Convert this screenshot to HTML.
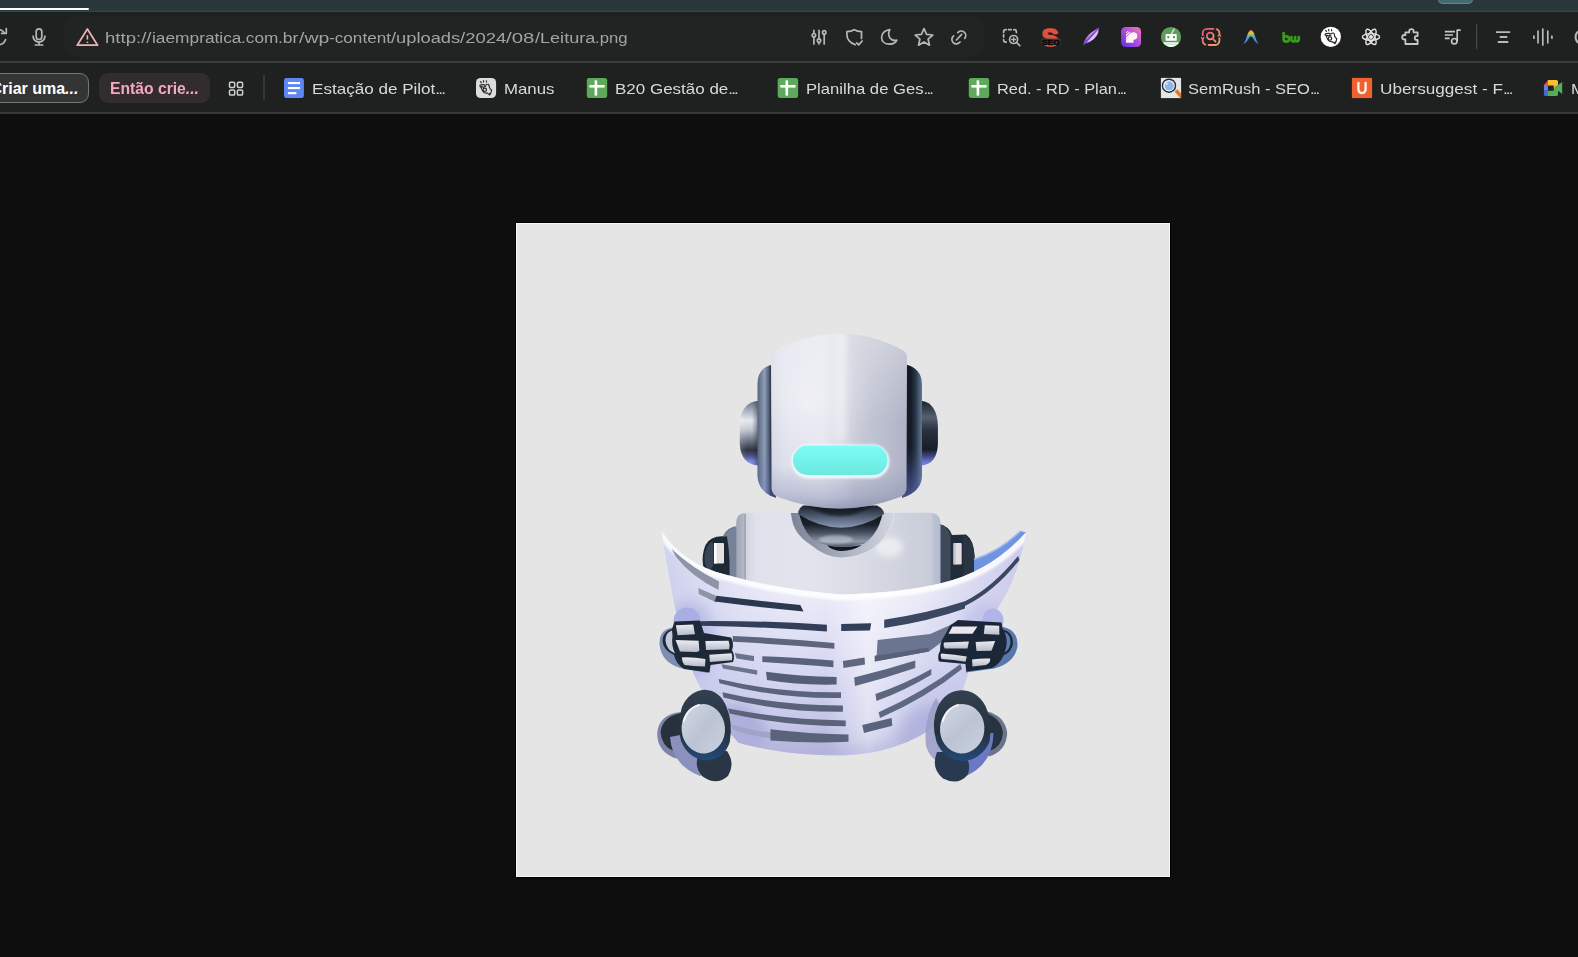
<!DOCTYPE html>
<html lang="pt-BR">
<head>
<meta charset="utf-8">
<title>Leitura.png</title>
<style>
  html, body { margin:0; padding:0; overflow:hidden; }
  body { width:1578px; height:957px; overflow:hidden; background:#0e0e0e; position:relative;
         font-family:"Liberation Sans", sans-serif; }
  .abs { position:absolute; }
  #strip { left:0; top:0; width:1578px; height:12px; background:#27373a; box-shadow:inset 0 -1.5px 0 #2f4547; }
  #tabline { left:0; top:8px; width:89px; height:2px; background:#ffffff; border-radius:0 1px 1px 0; }
  #toppill { left:1438px; top:-6px; width:35px; height:9.5px; border-radius:5px; background:#436a70; box-shadow:inset 0 -1px 0 #5a898d; }
  #toolbar { left:0; top:12px; width:1578px; height:49px; background:#1f2121; }
  #urlbar { left:64px; top:16px; width:920px; height:41px; border-radius:13px; background:#222424; }
  #sep1 { left:0; top:61px; width:1578px; height:2px; background:#3a3d3d; }
  #bookbar { left:0; top:63px; width:1578px; height:49px; background:#1f2020; }
  #sep2 { left:0; top:112px; width:1578px; height:2px; background:#363838; }
  #url { left:105px; top:28.25px; font-size:15.3px; line-height:19px; color:#a3a3a3; white-space:nowrap; width:530px; height:19px; }
  #url span { position:absolute; top:0; transform-origin:0 50%; white-space:pre; }
  .bm { top:79px; font-size:15px; line-height:19px; color:#d9d9d9; white-space:nowrap; transform-origin:0 50%; }
  .bm i { font-style:normal; letter-spacing:-1.6px; }
  .pill { top:73px; height:30px; box-sizing:border-box; border-radius:9px; }
  #pill1 { left:-20px; width:109px; background:#333535; border:1px solid #747776; }
  #pill2 { left:99px; width:111px; background:#332c2e; }
  .pt { top:79px; font-size:16px; line-height:20px; font-weight:bold; white-space:nowrap; transform-origin:0 50%; }
  .fav { top:78px; width:20px; height:20px; border-radius:3px; }
  #img { left:516px; top:223px; width:654px; height:654px; background:#e5e5e5; box-shadow:0 0 0 1px #000000; }
</style>
</head>
<body>
<div class="abs" id="strip"></div>
<div class="abs" id="tabline"></div>
<div class="abs" id="toppill"></div>
<div class="abs" id="toolbar"></div>
<div class="abs" id="urlbar"></div>
<div class="abs" id="sep1"></div>
<div class="abs" id="bookbar"></div>
<div class="abs" id="sep2"></div>

<div class="abs" id="url"><span style="left:0.0px;transform:scaleX(1.2147)">http://</span><span style="left:46.5px;transform:scaleX(1.1317)">iaempratica</span><span style="left:136.0px;transform:scaleX(1.1250)">.com</span><span style="left:173.3px;transform:scaleX(1.1426)">.br</span><span style="left:193.7px;transform:scaleX(1.2680)">/wp</span><span style="left:223.9px;transform:scaleX(1.1233)">-content</span><span style="left:286.0px;transform:scaleX(1.1961)">/uploads</span><span style="left:355.2px;transform:scaleX(1.2064)">/2024</span><span style="left:401.4px;transform:scaleX(1.3348)">/08</span><span style="left:429.8px;transform:scaleX(1.1814)">/Leitura</span><span style="left:490.1px;transform:scaleX(1.0915)">.png</span></div>

<!-- TOOLBAR-ICONS-START -->
<svg class="abs" style="left:0;top:0" width="1578" height="114" viewBox="0 0 1578 114" fill="none" stroke-linecap="round" stroke-linejoin="round">
  <defs>
    <linearGradient id="gP" x1="0" y1="1" x2="1" y2="0"><stop offset="0" stop-color="#5a2ef0"/><stop offset="0.5" stop-color="#ae4cde"/><stop offset="1" stop-color="#f878b4"/></linearGradient>
    <linearGradient id="gQ" x1="0" y1="0" x2="1" y2="1"><stop offset="0" stop-color="#e4567f"/><stop offset="1" stop-color="#f3a35c"/></linearGradient>
    <linearGradient id="gA" x1="0" y1="0" x2="0" y2="1"><stop offset="0" stop-color="#f06a50"/><stop offset="0.22" stop-color="#f0c040"/><stop offset="0.4" stop-color="#58c088"/><stop offset="0.6" stop-color="#4a90e8"/><stop offset="1" stop-color="#4a7fe0"/></linearGradient>
    <linearGradient id="gF" x1="0" y1="1" x2="1" y2="0"><stop offset="0" stop-color="#7a48c0"/><stop offset="0.5" stop-color="#b48ae6"/><stop offset="1" stop-color="#8a5ad0"/></linearGradient>
  </defs>
  <!-- reload (partial) -->
  <g stroke="#b6b6b6" stroke-width="1.700">
    <path d="M5.600 39.600 A7.600 7.600 0 0 1 -2 44.800"/>
    <path d="M-2 29.400 A7.600 7.600 0 0 1 4.200 32.800"/>
    <path d="M6.300 28.600 V33.400 H1.600"/>
  </g>
  <!-- mic -->
  <g stroke="#b6b6b6" stroke-width="1.7">
    <rect x="36.2" y="28.9" width="5.6" height="10.6" rx="2.8"/>
    <path d="M33.1 36.2 A5.9 5.9 0 0 0 44.9 36.2"/>
    <path d="M39 42.2 V45 M35.3 45 H42.7"/>
  </g>
  <!-- warning triangle -->
  <g stroke="#e9b5b1" stroke-width="1.7">
    <path d="M87.4 29 L97.6 45.2 H77.2 Z"/>
    <path d="M87.4 35.2 V39.6" stroke-width="1.6" stroke-linecap="butt"/>
    <path d="M87.4 41.6 V43" stroke-width="1.6" stroke-linecap="butt"/>
  </g>
  <!-- sliders -->
  <g stroke="#b6b6b6" stroke-width="1.7">
    <path d="M813.9 30.4 V33.2 M813.9 37.2 V44"/>
    <circle cx="813.9" cy="35.2" r="1.700"/>
    <path d="M819 30.4 V38.6 M819 42.6 V44"/>
    <circle cx="819" cy="40.6" r="1.700"/>
    <path d="M824.2 34.6 V44"/>
    <circle cx="824.2" cy="32.4" r="1.700"/>
  </g>
  <!-- shield -->
  <g stroke="#b6b6b6" stroke-width="1.7">
    <path d="M855.2 44.6 C849.5 42.6 846.9 38.8 846.9 34.4 V31.6 C850.3 31.6 852.6 30.8 854.2 29.6 C855.8 30.8 858.1 31.6 861.5 31.6 V38.5"/>
    <path d="M856.6 42.8 L858.6 44.8 L862.2 41"/>
  </g>
  <!-- moon -->
  <path stroke="#b6b6b6" stroke-width="1.7" d="M889.8 29.6 C885 30.2 881.6 33.4 881.6 37.4 C881.6 41.6 885 44.2 889.4 44.2 C892.6 44.2 895.4 42.6 896.8 40.2 C891 41.4 886.6 36.4 889.8 29.6 Z"/>
  <!-- star -->
  <path stroke="#b6b6b6" stroke-width="1.7" d="M924 28.6 L926.6 34.4 L932.8 35 L928.1 39.2 L929.5 45.2 L924 42 L918.5 45.2 L919.9 39.2 L915.2 35 L921.4 34.4 Z"/>
  <!-- link -->
  <g stroke="#b6b6b6" stroke-width="1.700">
    <path d="M957.800 32.600 A4.500 4.500 0 1 1 964.700 38.400"/>
    <path d="M960 42 A4.500 4.500 0 1 1 953.600 35.800"/>
    <path d="M956.400 40 L961.700 34.300"/>
  </g>
  <!-- dashed box + zoom -->
  <g stroke="#b6b6b6" stroke-width="1.700">
    <path d="M1003.600 32.400 V31.900 A2.200 2.200 0 0 1 1005.800 29.700 H1006.200 M1008.600 29.700 H1011.200 M1013.800 29.700 H1014.200 A2.200 2.200 0 0 1 1016.400 31.900 V32.600 M1003.600 34.800 V37 M1003.600 39.600 V40 A2.200 2.200 0 0 0 1005.800 42.200 H1006.200"/>
    <circle cx="1013.600" cy="39.500" r="4"/>
    <path d="M1016.600 42.500 L1019.800 45.700"/>
    <path d="M1011.700 39.500 H1015.500 M1013.600 37.600 V41.400" stroke-width="1.300"/>
  </g>
  <!-- S SEO -->
  <text x="1041.600" y="45.800" font-family="Liberation Sans, sans-serif" font-weight="bold" font-size="24.500" fill="#e1503c" stroke="#e1503c" stroke-width="1.600" textLength="17" lengthAdjust="spacingAndGlyphs">S</text>
  <rect x="1041.200" y="38.600" width="19.800" height="6.400" fill="#343434" stroke="none" opacity="0.85"/>
  <text x="1041.800" y="44.900" font-family="Liberation Sans, sans-serif" font-weight="bold" font-size="8" fill="#050505" stroke="#050505" stroke-width="0.400" textLength="18" lengthAdjust="spacingAndGlyphs">SEO</text>
  <!-- feather -->
  <g stroke="none">
    <path fill="#8a52c8" d="M1083.200 45.800 Q1083.600 42 1085.200 39 Q1088.400 33.600 1093 31 Q1096 29.200 1099 27.400 Q1099.200 31.600 1097.200 35.200 Q1094.600 39.400 1090.400 41.800 Q1087.600 43.200 1085.400 43.600 Z"/>
    <path fill="#c7a4ee" d="M1085.800 40 Q1088.600 34.400 1093.400 31.600 Q1096 30 1098 28.800 Q1092 33.600 1085.800 40 Z"/>
    <path fill="#dcc6f6" d="M1086.600 42.400 Q1092 37 1098.400 29.600 Q1098.200 32.800 1096.600 35.400 Q1094.200 39.200 1090.200 41.200 Q1088 42.200 1086.600 42.400 Z"/>
    <path d="M1084.600 43.600 Q1091 37 1098.400 28.200" stroke="#7a40b8" stroke-width="0.900" fill="none"/>
  </g>
  <!-- P app -->
  <rect x="1121.100" y="26.900" width="20" height="20.200" rx="4.600" fill="url(#gP)" stroke="none"/>
  <g stroke="none" fill="#fff4f3">
    <circle cx="1133.500" cy="36" r="3.800"/>
    <path d="M1126 37.200 L1130.400 33.200 L1133.500 36 V42.800 H1126 Z"/>
    <path d="M1126 34.800 L1129.600 31.400 L1130.500 32.300 L1126 36.600 Z M1126 32.400 L1127.600 31 L1128.500 31.200 L1126 33.600 Z"/>
  </g>
  <!-- green robot -->
  <circle cx="1171" cy="37" r="10.100" fill="#5c9d5c" stroke="none"/>
  <rect x="1165.600" y="34" width="11.100" height="6.800" rx="0.600" fill="#ffffff" stroke="none"/>
  <rect x="1167.300" y="36.200" width="1.900" height="1.900" fill="#4f8a4f" stroke="none"/>
  <rect x="1173" y="36.200" width="1.900" height="1.900" fill="#4f8a4f" stroke="none"/>
  <path stroke="#c8f0c4" stroke-width="1.500" stroke-linecap="butt" d="M1171.400 34 L1174.200 28.800"/>
  <path fill="#f4fbf4" stroke="none" d="M1163 42.300 H1179 Q1176.200 47 1171 47.100 Q1165.800 47 1163 42.300 Z"/>
  <path stroke="#9ccf9c" stroke-width="0.700" d="M1166 44.200 H1176"/>
  <!-- Q gradient icon -->
  <g stroke="url(#gQ)" stroke-width="1.8">
    <path d="M1213.4 28.8 H1207 A4.3 4.3 0 0 0 1202.7 33.1 V35.2 M1208.6 45 H1215 A4.3 4.3 0 0 0 1219.4 40.7 V38.2"/>
    <path d="M1202.7 38.6 V40.7 A4.3 4.3 0 0 0 1205.4 44.6 M1219.4 35 V33.1 A4.3 4.3 0 0 0 1216.6 29.2" />
    <path d="M1201.4 37.4 L1202.7 39 L1204 37.4 M1218.1 36.2 L1219.4 34.6 L1220.7 36.2" stroke-width="1.2"/>
    <circle cx="1210.2" cy="36" r="3.4"/>
    <path d="M1212.8 38.6 L1215.6 41.6"/>
  </g>
  <!-- A arc -->
  <path fill="url(#gA)" stroke="none" d="M1243.2 44 C1246.6 40.6 1247.6 30 1251 30 C1254.4 30 1255.4 40.6 1258.8 44 C1254 42.2 1253.4 36.4 1251 36.4 C1248.6 36.4 1248 42.2 1243.2 44 Z"/>
  <!-- bw -->
  <g fill="none" stroke="#3b9a19" stroke-width="2.700" stroke-linecap="round" stroke-linejoin="round">
    <path d="M1283.600 33.200 V39 A2.700 2.700 0 1 0 1286.300 36.300 H1285.400"/>
    <path d="M1291.400 37 V39.600 A1.850 1.850 0 0 0 1295.100 39.600 V37 M1295.100 39.600 A1.850 1.850 0 0 0 1298.800 39.600 V37"/>
  </g>
  <!-- hand white circle -->
  <circle cx="1330.800" cy="36.800" r="10.150" fill="#ffffff" stroke="none"/>
  <use href="#manushand" transform="translate(845.200 -51.300)"/>
  <!-- atom -->
  <g stroke="#e6e6e6" stroke-width="1.400">
    <ellipse cx="1371" cy="36.900" rx="8.600" ry="3.300"/>
    <ellipse cx="1371" cy="36.900" rx="8.600" ry="3.300" transform="rotate(60 1371 36.900)"/>
    <ellipse cx="1371" cy="36.900" rx="8.600" ry="3.300" transform="rotate(-60 1371 36.900)"/>
    <circle cx="1371" cy="36.900" r="1.300" fill="#e6e6e6"/>
  </g>
  <!-- puzzle -->
  <path stroke="#c6c6c6" stroke-width="1.8" d="M1405.4 44 V39.4 H1404.4 A2.2 2.2 0 0 1 1404.4 35 H1405.4 V32.4 H1409.2 V31.4 A2.2 2.2 0 0 1 1413.6 31.400 V32.4 H1417.6 V36 H1416.8 A2 2 0 0 0 1416.8 40 H1417.6 V44 Z"/>
  <!-- music queue -->
  <g stroke="#c6c6c6" stroke-width="1.7">
    <path d="M1444.8 31.6 H1455 M1444.8 35 H1453 M1444.800 38.3 H1449.6" stroke-linecap="butt"/>
    <path d="M1457.2 41 V30.2 H1460"/>
    <circle cx="1454.300" cy="41.2" r="2.7"/>
  </g>
  <!-- divider -->
  <path stroke="#474949" stroke-width="1.2" d="M1476.600 24.5 V49"/>
  <!-- three lines -->
  <g stroke="#b8b8b8" stroke-width="1.8" stroke-linecap="butt">
    <path d="M1496 32.2 H1510.200 M1499.700 37 H1507.300 M1497.800 42 H1508.300"/>
  </g>
  <!-- waveform -->
  <g stroke="#b8b8b8" stroke-width="1.7">
    <path d="M1542.800 29 V45 M1538 31 V42.800 M1547.800 31 V42.800 M1533.900 36 V38.2 M1551.900 36 V38.2"/>
  </g>
  <!-- edge circle -->
  <path stroke="#b8b8b8" stroke-width="2" d="M1580 30.600 A7 7 0 0 0 1580 43.600"/>

  <!-- ===== favicons ===== -->
  <g stroke="none">
    <!-- docs -->
    <rect x="284" y="77.900" width="19.900" height="20.200" rx="2.400" fill="#5e86f5"/>
    <rect x="287.900" y="82" width="12.200" height="2.100" fill="#ffffff"/>
    <rect x="287.900" y="87" width="12.200" height="2.100" fill="#ffffff"/>
    <rect x="287.900" y="92.100" width="8.500" height="2.100" fill="#ffffff"/>
    <!-- manus -->
    <rect x="476" y="77.900" width="20.100" height="20.200" rx="4.600" fill="#dcdcdc"/>
    <g id="manushand"><g fill="none" stroke="#262626" stroke-width="1.150" stroke-linecap="round" stroke-linejoin="round">
      <path d="M480 86.200 Q479.600 84.800 481.200 84.900 L483.600 84.500 Q485 85.700 486 85 Q487.400 83.800 488.600 84.600 Q489.400 86 489.500 87.600 Q490 89 491.600 90 Q491.200 92.800 489.700 95 Q488.200 94 487.400 93 Q485.600 93.400 484 92.400 Q482.400 91.200 481.800 89.200 Q481.600 87.600 480 86.200 Z"/>
      <path d="M481.200 86.600 Q483.400 87.600 485.600 86.600"/>
      <circle cx="484.800" cy="89.800" r="1.700"/>
      <path d="M480.400 81.700 L481.300 82.700 M483.500 80.600 V82 M486.400 80.800 V82.100"/>
    </g>
    <path d="M488.600 93.400 L489.700 95.200 L490.800 92.600 Z" fill="#262626" stroke="none"/></g>
    <!-- sheets x3 -->
    <g id="sheet1">
      <rect x="586.800" y="77.900" width="20.400" height="20.200" rx="2.400" fill="#5daa5b"/>
      <rect x="594.600" y="80.400" width="2.600" height="15.200" fill="#ffffff"/>
      <rect x="589.400" y="85" width="15.200" height="2.600" fill="#ffffff"/>
    </g>
    <use href="#sheet1" x="190.900"/>
    <use href="#sheet1" x="382"/>
    <!-- semrush -->
    <rect x="1160.900" y="77.900" width="20.200" height="20.200" fill="#e5e5e5"/>
    <path d="M1174.600 91.400 L1177.400 89.200 L1181.100 93.600 V98.100 H1180.200 Z" fill="#e8751c"/>
    <circle cx="1169" cy="85.700" r="6.500" fill="#fafdff" stroke="#232a36" stroke-width="1.400"/>
    <circle cx="1169.200" cy="85.900" r="4.600" fill="#8fb6e9"/>
    <circle cx="1167" cy="83.800" r="1" fill="#d8e8fa"/>
    <!-- ubersuggest -->
    <rect x="1351.900" y="77.900" width="20.200" height="20.200" fill="#f0612f"/>
    <path d="M1358.400 82.800 V89.600 A3.600 3.600 0 0 0 1365.600 89.600 V82.800" fill="none" stroke="#fff6ec" stroke-width="2.300"/>
    <!-- meet -->
    <path d="M1543.900 85 L1548 80 V85 Z" fill="#e8503e"/>
    <rect x="1543.900" y="85" width="4.100" height="5.700" fill="#5b84f2"/>
    <path d="M1543.900 90.700 H1548 V95.900 H1545.400 Q1543.900 95.900 1543.900 94.400 Z" fill="#4468d8"/>
    <path d="M1548 80 H1556.500 Q1558 80 1558 81.500 V85 L1553.700 88.400 V85.400 H1548 Z" fill="#f7bf2f"/>
    <path d="M1548 90.700 H1553.700 V88.400 L1558 85 L1562.200 81.900 V94 L1558 90.700 V94.400 Q1558 95.900 1556.500 95.900 H1548 Z" fill="#54ad58"/>
  </g>
  <!-- grid icon -->
  <g stroke="#d0d0d0" stroke-width="1.5">
    <rect x="229.500" y="82.200" width="5.200" height="5.200" rx="1.200"/>
    <rect x="237.400" y="82.200" width="5.200" height="5.200" rx="1.200"/>
    <rect x="229.500" y="89.900" width="5.200" height="5.200" rx="1.200"/>
    <rect x="237.400" y="89.900" width="5.200" height="5.200" rx="1.200"/>
  </g>
  <path stroke="#474949" stroke-width="1.200" d="M264 75.500 V100"/>
</svg>
<!-- TOOLBAR-ICONS-END -->

<div class="abs pill" id="pill1"></div>
<div class="abs pill" id="pill2"></div>
<div class="abs pt" id="pt1" style="left:-9.6px;color:#ffffff;">Criar uma<i>...</i></div>
<div class="abs pt" id="pt2" style="left:109.6px;transform:scaleX(0.98);color:#f3a9bf;">Então crie<i>...</i></div>

<!-- BOOKMARKS -->
<div class="abs bm" id="b1" style="left:312px;transform:scaleX(1.138);">Estação de Pilot<i>...</i></div>
<div class="abs bm" id="b2" style="left:504px;transform:scaleX(1.12);">Manus</div>
<div class="abs bm" id="b3" style="left:615px;transform:scaleX(1.132);">B20 Gestão de<i>...</i></div>
<div class="abs bm" id="b4" style="left:806px;transform:scaleX(1.11);">Planilha de Ges<i>...</i></div>
<div class="abs bm" id="b5" style="left:997px;transform:scaleX(1.09);">Red. - RD - Plan<i>...</i></div>
<div class="abs bm" id="b6" style="left:1188px;transform:scaleX(1.1);">SemRush - SEO<i>...</i></div>
<div class="abs bm" id="b7" style="left:1380px;transform:scaleX(1.143);">Ubersuggest - F<i>...</i></div>
<div class="abs bm" id="b8" style="left:1571px;transform:scaleX(1.12);">M</div>

<!-- FAVICONS -->

<div class="abs" id="img">
<!-- ROBOT-START -->
<svg class="abs" style="left:0;top:0" width="654" height="654" viewBox="516 223 654 654">
<defs>
  <linearGradient id="rg-face" x1="0" y1="0" x2="1" y2="0">
    <stop offset="0" stop-color="#cdd0df"/><stop offset="0.12" stop-color="#dadce9"/><stop offset="0.38" stop-color="#e0e1ec"/>
    <stop offset="0.52" stop-color="#d4d6e2"/><stop offset="0.6" stop-color="#c6c9d7"/><stop offset="0.8" stop-color="#bbbecd"/><stop offset="1" stop-color="#aaaec3"/>
  </linearGradient>
  <linearGradient id="rg-faceV" x1="0" y1="0" x2="0" y2="1">
    <stop offset="0" stop-color="#ffffff" stop-opacity="0.35"/><stop offset="0.5" stop-color="#ffffff" stop-opacity="0"/>
    <stop offset="0.74" stop-color="#7880a8" stop-opacity="0.0"/><stop offset="0.9" stop-color="#6a74a0" stop-opacity="0.3"/><stop offset="1" stop-color="#55608c" stop-opacity="0.6"/>
  </linearGradient>
  <radialGradient id="rg-faceHi" cx="0.28" cy="0.38" r="0.45">
    <stop offset="0" stop-color="#ffffff" stop-opacity="0.5"/><stop offset="1" stop-color="#ffffff" stop-opacity="0"/>
  </radialGradient>
  <linearGradient id="rg-bandL" x1="0" y1="0" x2="1" y2="0"><stop offset="0" stop-color="#56657c"/><stop offset="0.38" stop-color="#8f9eb8"/><stop offset="0.6" stop-color="#55647a"/><stop offset="0.72" stop-color="#2b3646"/><stop offset="1" stop-color="#2b3646"/></linearGradient>
  <linearGradient id="rg-bandR" x1="0" y1="0" x2="1" y2="0"><stop offset="0" stop-color="#141b25"/><stop offset="0.45" stop-color="#141b25"/><stop offset="0.7" stop-color="#2d3a4c"/><stop offset="0.92" stop-color="#566884"/><stop offset="1" stop-color="#62748f"/></linearGradient>
  <linearGradient id="rg-earL" x1="0" y1="0" x2="0" y2="1"><stop offset="0" stop-color="#64728a"/><stop offset="0.12" stop-color="#9aa5b5"/><stop offset="0.3" stop-color="#e6e9f0"/><stop offset="0.45" stop-color="#c0c6d0"/><stop offset="0.62" stop-color="#6c7482"/><stop offset="0.76" stop-color="#2e3540"/><stop offset="0.85" stop-color="#4a5284"/><stop offset="0.93" stop-color="#7a86da"/><stop offset="1" stop-color="#8a94e0"/></linearGradient>
  <linearGradient id="rg-earLV" x1="0" y1="0" x2="1" y2="0"><stop offset="0" stop-color="#ffffff" stop-opacity="0.15"/><stop offset="0.4" stop-color="#ffffff" stop-opacity="0"/><stop offset="0.65" stop-color="#1e2837" stop-opacity="0"/><stop offset="1" stop-color="#1e2837" stop-opacity="0.5"/></linearGradient>
  <linearGradient id="rg-earR" x1="0" y1="0" x2="0" y2="1"><stop offset="0" stop-color="#1a222c"/><stop offset="0.25" stop-color="#566070"/><stop offset="0.45" stop-color="#2a323e"/><stop offset="0.75" stop-color="#171d26"/><stop offset="0.85" stop-color="#3a447e"/><stop offset="0.95" stop-color="#6c7ad4"/><stop offset="1" stop-color="#7a88e0"/></linearGradient>
  <linearGradient id="rg-blueV" x1="0" y1="0" x2="0" y2="1">
    <stop offset="0" stop-color="#5c6ac4" stop-opacity="0"/><stop offset="0.62" stop-color="#5c6ac4" stop-opacity="0"/><stop offset="1" stop-color="#6a78d0" stop-opacity="0.6"/>
  </linearGradient>
  <linearGradient id="rg-visor" x1="0" y1="0" x2="0" y2="1">
    <stop offset="0" stop-color="#7dfcf8"/><stop offset="1" stop-color="#6be9dd"/>
  </linearGradient>
  <linearGradient id="rg-body" x1="0" y1="0" x2="1" y2="0">
    <stop offset="0" stop-color="#9ea5b6"/><stop offset="0.04" stop-color="#b4bac8"/><stop offset="0.045" stop-color="#d3d6e1"/><stop offset="0.1" stop-color="#dfe2eb"/>
    <stop offset="0.35" stop-color="#e3e5ed"/><stop offset="0.7" stop-color="#d5d8e2"/><stop offset="0.955" stop-color="#c8ccd8"/><stop offset="0.965" stop-color="#bcc3d2"/><stop offset="1" stop-color="#b0bad2"/>
  </linearGradient>
  <linearGradient id="rg-collar" x1="0" y1="0" x2="1" y2="0">
    <stop offset="0" stop-color="#7c8396"/><stop offset="0.4" stop-color="#a0a5b6"/><stop offset="0.75" stop-color="#bfc3d0"/><stop offset="1" stop-color="#d2d5df"/>
  </linearGradient>
  <linearGradient id="rg-neck1" x1="0" y1="0" x2="0" y2="1">
    <stop offset="0" stop-color="#1a212b"/><stop offset="0.45" stop-color="#4a5668"/><stop offset="0.8" stop-color="#73809a"/><stop offset="1" stop-color="#8a97ab"/>
  </linearGradient>
  <linearGradient id="rg-neck2" x1="0" y1="0" x2="0" y2="1">
    <stop offset="0" stop-color="#0d1218"/><stop offset="0.35" stop-color="#1b222c"/><stop offset="0.6" stop-color="#4a5464"/><stop offset="0.85" stop-color="#8e97a9"/><stop offset="1" stop-color="#4e5868"/>
  </linearGradient>
  <linearGradient id="rg-paper" x1="0" y1="0" x2="0" y2="1">
    <stop offset="0" stop-color="#f5f5fb"/><stop offset="0.3" stop-color="#e9e9f7"/><stop offset="0.6" stop-color="#d6d7f1"/><stop offset="0.85" stop-color="#c3c4e8"/><stop offset="1" stop-color="#b0b1db"/>
  </linearGradient>
  <linearGradient id="rg-paperH" x1="0" y1="0" x2="1" y2="0">
    <stop offset="0" stop-color="#aeb2e0" stop-opacity="0.55"/><stop offset="0.2" stop-color="#c9ccee" stop-opacity="0.3"/><stop offset="0.45" stop-color="#ffffff" stop-opacity="0"/>
    <stop offset="0.56" stop-color="#ffffff" stop-opacity="0.5"/><stop offset="0.7" stop-color="#ffffff" stop-opacity="0.05"/><stop offset="0.72" stop-color="#bdbde8" stop-opacity="0.05"/><stop offset="0.86" stop-color="#bdbde8" stop-opacity="0.45"/><stop offset="1" stop-color="#aeaee0" stop-opacity="0.65"/>
  </linearGradient>
  <linearGradient id="rg-footC" x1="0" y1="0" x2="1" y2="1">
    <stop offset="0" stop-color="#d3d8e4"/><stop offset="0.5" stop-color="#bcc4d4"/><stop offset="1" stop-color="#c9cfdd"/>
  </linearGradient>
  <linearGradient id="rg-ring" x1="0" y1="0" x2="0" y2="1">
    <stop offset="0" stop-color="#33404f"/><stop offset="0.6" stop-color="#26313f"/><stop offset="1" stop-color="#234a78"/>
  </linearGradient>
  <linearGradient id="rg-cell" x1="0" y1="0" x2="0" y2="1">
    <stop offset="0" stop-color="#ebecf1"/><stop offset="1" stop-color="#b9bdcb"/>
  </linearGradient>
  <filter id="rf-b1" x="-20%" y="-20%" width="140%" height="140%"><feGaussianBlur stdDeviation="1.2"/></filter>
  <filter id="rf-b3" x="-30%" y="-30%" width="160%" height="160%"><feGaussianBlur stdDeviation="3"/></filter>
  <filter id="rf-b6" x="-40%" y="-40%" width="180%" height="180%"><feGaussianBlur stdDeviation="6"/></filter>
  <clipPath id="faceClip"><path d="M771 357 Q771 352.5 775 350.500 Q805 334 839 333.600 Q873 334 903 350.500 Q907 352.500 907 357 L906.500 489 Q906 494 900 497 Q870 508.500 839.500 508.500 Q809 508.500 778 497 Q772 494 771.600 489 Z"/></clipPath>
  <clipPath id="paperClip"><path id="paperPath" d="M661.400 530.400 Q683.300 564 726 574.800 Q776 589 840 594.500 Q900 593 942 582.900 Q990 572 1025.900 532.600 Q1021 565 1005.800 595 Q996 612 986 626 Q975 655 968 672.800 Q962 700 940 722 C915 743 880 754 845 755.200 C805 756 765 750.500 738.400 742.400 Q712 715 693.300 672.800 Q683 640 676 612 Q669 580 661.400 530.400 Z"/></clipPath>
</defs>

<rect x="516" y="223" width="654" height="654" fill="#e5e5e5"/>
<rect x="516.500" y="223.500" width="653" height="653" fill="none" stroke="#f6f6f6" stroke-width="1"/>

<!-- ===== arms / shoulders (behind body) ===== -->
<g id="armL">
  <path d="M737.500 526 Q727 527 723 536 L737.500 536 L737.500 590 L727 584 L727 540 Z" fill="#6f7b90"/>
  <path d="M737.500 527 Q728 528 724 537 Q730 560 728 584 L737.500 590 Z" fill="#76829a"/>
  <path d="M727 536.500 Q711 534.500 705.500 545 Q701.500 555 703 565 Q705 573 712 576 L729 585 Q731 560 727 536.500 Z" fill="#1e2835"/>
  <path d="M712 541.500 Q705.500 546 704.500 556 Q704.500 566 709 570.500 Q713 568 713.500 563 L713.500 545 Z" fill="#384556"/>
  <rect x="714" y="543" width="10" height="20.500" rx="1" fill="#e6dfe0"/>
  <rect x="714" y="543" width="2.600" height="20.500" fill="#fbfbfd"/>
</g>
<g id="armR">
  <path d="M939 524 Q949 526 952 535 L966 534.500 Q974 540 974.500 556 L974.500 574 L939 588 Z" fill="#222c38"/>
  <path d="M939 524 Q948 526 950.500 536 L950.500 580 L939 586 Z" fill="#3d4858"/>
  <path d="M963 535 Q973 539 974.500 556 L974.500 572 L963.500 577 Z" fill="#2a3543"/>
  <rect x="953.500" y="543" width="8.200" height="21.500" rx="1" fill="#e2dde0"/>
  <rect x="953.500" y="543" width="2.200" height="21.500" fill="#c4c4ce"/>
</g>

<!-- ===== body ===== -->
<path d="M746 512.700 H930 Q940.500 513 940.500 524 V600 H736.300 V522 Q736.300 513 746 512.700 Z" fill="url(#rg-body)"/>
<path d="M745.200 514 V600" stroke="#7a8397" stroke-width="1.200" opacity="0.7" fill="none"/>
<ellipse cx="889" cy="547" rx="14" ry="10" fill="#ffffff" opacity="0.55" filter="url(#rf-b3)"/>
<!-- collar -->
<path d="M790.500 513 C792 530 800 538 810.400 545 Q825 557.500 840.800 558.100 Q858 557.500 871 550 C884 541 893 528 894 513 Z" fill="url(#rg-collar)"/>
<path d="M790.500 513 C792 530 800 538 810.400 545 Q825 557.500 840.800 558.100 Q858 557.500 871 550 C884 541 893 528 894 513" fill="none" stroke="#e4e6ee" stroke-width="1" opacity="0.8"/>
<!-- neck rings -->
<path d="M799 513 C803 530 810 538 816.500 542.300 Q840.800 550 864 543.700 C872 538 879 530 882.700 513 Z" fill="url(#rg-neck2)"/>
<ellipse cx="836" cy="539.500" rx="17" ry="4.200" fill="#c2c7d3" opacity="0.6" filter="url(#rf-b1)"/>
<path d="M827 545.200 Q841 548.600 862 545 Q852 551.200 840.800 550.900 Q832 550.500 827 545.200 Z" fill="#121820"/>
<path d="M803 505.500 L877 505.500 Q884 509 884.200 514 Q841 541.400 798 514 Q798 509 803 505.500 Z" fill="url(#rg-neck1)"/>
<path d="M808 506 Q840 526 872 506 Z" fill="#0e131a" opacity="0.7" filter="url(#rf-b1)"/>
<!-- ===== head ===== -->
<path d="M758.600 401 Q741 402 739.800 424 V444 Q741 464.500 758.600 465.500 Z" fill="url(#rg-earL)"/>
<path d="M758.600 401 Q741 402 739.800 424 V444 Q741 464.500 758.600 465.500 Z" fill="url(#rg-earLV)"/>
<path d="M921.900 401 Q937 403 937.900 426 V444 Q937 464 921.900 465.500 Z" fill="url(#rg-earR)"/>
<path d="M772.500 364.500 Q757.500 368 757.500 384 V476 Q758 489 770 495.500 Q773 497 776 497.800 L776 364.500 Z" fill="url(#rg-bandL)"/>
<path d="M772.500 364.500 Q757.500 368 757.500 384 V476 Q758 489 770 495.500 Q773 497 776 497.800 L776 364.500 Z" fill="url(#rg-blueV)" opacity="0.5"/>
<path d="M905.500 364.500 Q921.500 368 922 384 V476 Q921.500 489 908 495.500 Q905 497 902 497.800 L902 364.500 Z" fill="url(#rg-bandR)"/>
<path d="M905.500 364.500 Q921.500 368 922 384 V476 Q921.500 489 908 495.500 Q905 497 902 497.800 L902 364.500 Z" fill="url(#rg-blueV)"/>
<g clip-path="url(#faceClip)">
  <rect x="765" y="330" width="150" height="185" fill="url(#rg-face)"/>
  <rect x="765" y="330" width="150" height="185" fill="url(#rg-faceHi)"/>
  <rect x="765" y="330" width="150" height="185" fill="url(#rg-faceV)"/>
  <rect x="836" y="330" width="10" height="110" fill="#ffffff" opacity="0.35" filter="url(#rf-b3)"/>
</g>
<!-- visor -->
<rect x="791.500" y="444.500" width="98" height="34" rx="17" fill="#f4fdff" opacity="0.9" filter="url(#rf-b1)"/>
<rect x="793" y="445.600" width="94.500" height="29.400" rx="14.700" fill="url(#rg-visor)"/>

<!-- ===== blue back of paper (right) ===== -->
<path d="M974 559.500 Q1000 551 1020.500 531 L1026 532.600 Q1004 560 974 574 Z" fill="#6f94e2"/>
<path d="M974 559.500 Q1000 551 1020.500 531" fill="none" stroke="#9fb8ee" stroke-width="1.500"/>

<!-- ===== paper ===== -->
<use href="#paperPath" fill="url(#rg-paper)"/>
<g clip-path="url(#paperClip)">
  <rect x="655" y="525" width="380" height="235" fill="url(#rg-paperH)"/>
  <!-- top rim highlight -->
  <path d="M661.400 530.400 Q683.300 564 726 574.800 Q776 589 840 594.500 Q900 593 942 582.900 Q990 572 1025.900 532.600" fill="none" stroke="#ffffff" stroke-width="12" opacity="0.85" filter="url(#rf-b1)"/>
  <!-- lavender shadows near hands/feet -->
  <ellipse cx="690" cy="640" rx="26" ry="40" fill="#a9ade0" opacity="0.55" filter="url(#rf-b6)"/>
  <ellipse cx="985" cy="640" rx="24" ry="38" fill="#b3b6e4" opacity="0.5" filter="url(#rf-b6)"/>
  <ellipse cx="735" cy="735" rx="30" ry="30" fill="#9b9ed0" opacity="0.6" filter="url(#rf-b6)"/>
  <ellipse cx="930" cy="735" rx="30" ry="30" fill="#a5a8d8" opacity="0.55" filter="url(#rf-b6)"/>
  <path d="M700 700 Q780 745 850 748 Q910 742 950 700 L950 760 L700 760 Z" fill="#b3b4dc" opacity="0.55" filter="url(#rf-b6)"/>
  <!-- text lines: left page -->
  <g>
    <path d="M671.500 549 Q692 568 719 581.500 L718.500 590 Q692 577 676 557 Z" fill="#8d94a7"/>
    <path d="M698.200 588 L716.500 596 L716.200 602.400 L698.800 594 Z" fill="#8e95a8"/>
    <path d="M716.500 595.800 Q760 601 800.300 605.100 L803.500 611.500 Q760 607.500 714.600 601.600 Z" fill="#2c3850"/>
    <path d="M676 621.500 Q750 619.500 826.900 624.800 L826.900 631.400 Q760 626.500 700 625.800 L676 626 Z" fill="#343e58"/>
    <path d="M732.800 636 Q785 638.300 834.400 643 L834.400 648.800 Q785 644.500 732.800 641.800 Z" fill="#5e667e"/>
    <path d="M734.700 653 L754 656 L754 661.200 L736.500 658.500 Z" fill="#6b738a"/>
    <path d="M762.300 656.200 Q800 657.500 833.400 660.600 L833.400 667.200 Q800 664.500 762.300 662 Z" fill="#5a627b"/>
    <path d="M721.500 664.300 L757.200 670.200 L757.200 674.800 L723 668.600 Z" fill="#6d758c"/>
    <path d="M766 671.800 Q800 676.500 836.600 677 L836.600 684.500 Q800 685.500 767 680 Z" fill="#565e77"/>
    <path d="M718.700 679 Q780 693.300 841 692.200 L841 698 Q780 699.300 719.500 683.200 Z" fill="#5c647c"/>
    <path d="M722.400 692.200 Q780 705.800 842.900 705.400 L842.900 711.800 Q780 712.300 723.500 697.400 Z" fill="#5a627a"/>
    <path d="M728 708.600 Q786 719.800 845.700 720.400 L845.700 726.200 Q786 726.300 729.500 713.600 Z" fill="#5b637b"/>
    <path d="M731 724.500 Q750 730 770.400 732.500 L770.400 738 Q750 736 733 729.500 Z" fill="#a0a4c6"/>
    <path d="M770.400 729.200 Q810 734 848.500 734.500 L848.500 741.800 Q810 743.500 770.400 740.500 Z" fill="#5a637a"/>
  </g>
  <!-- center column -->
  <path d="M841.200 623.900 L871.200 623.300 L870 630.400 L841.200 631 Z" fill="#343e58"/>
  <path d="M842.800 661 L864.500 657.600 L865 664.600 L843.500 668 Z" fill="#5f6880"/>
  <!-- right page -->
  <g>
    <path d="M884.200 619.800 Q930 612.500 965 601.200 Q992 588 1018 556 L1019.500 560 Q994 592 965 606 L965 608.400 Q930 621 884.200 627.900 Z" fill="#3b4660"/>
    <path d="M877.600 640 L930.300 634 L960.400 620.500 L962 627 L929 651.500 L874.800 661.500 L874.800 656 L876.700 655 Z" fill="#6c7590"/>
    <path d="M874.800 656 L928.400 647.400 L929 651.500 L874.800 661.500 Z" fill="#58617a"/>
    <path d="M854.100 677.500 Q886 670 915.300 660.600 L915.300 668 Q886 678 855 686 Z" fill="#5d6680"/>
    <path d="M875.400 694 Q905 684 931.300 669 L931.300 674.700 Q905 690.500 876.500 701 Z" fill="#5d6680"/>
    <path d="M878.600 712.300 Q924 692 960.400 664 L962 669 Q926 698 880 718 Z" fill="#5f6882"/>
    <path d="M862.200 725.100 L891.700 718 L892.300 725.800 L864 733 Z" fill="#5a637c"/>
  </g>
</g>


<!-- ===== left hand ===== -->
<g id="handL">
  <ellipse cx="687" cy="621" rx="13.500" ry="13.500" fill="#a9aee4"/>
  <path d="M676 627 Q659 628 659.500 644 Q661 662 680 668 L708 673 L709 660 L690 655 Z" fill="#7e8db2"/>
  <path d="M674.500 621.500 L700 620.500 L704 633 L731 637.500 Q734.500 643 732 650 Q735.500 656 733 662 L710.500 665 L709.500 672.500 L684 669 Q676 664 674 655 Q663 650 662.500 641 Q663 631 672 629 Z" fill="#1d2937"/>
  <path d="M672 630.500 Q665 632.500 665.500 641 Q666.500 650 675 653.500 Q671 645 672.500 636 Z" fill="#c5c9dc"/>
  <path d="M675.900 625.200 L693.200 624.400 L695 634.200 L677.600 635.200 Z" fill="url(#rg-cell)"/>
  <path d="M675.600 640 L698.600 640.800 L699.400 650.600 Q698.600 652 696.400 652 L680 651.500 Z" fill="url(#rg-cell)"/>
  <path d="M705.400 641 L728.600 640.800 Q730.200 645 729.200 649.200 L706 649.900 Z" fill="url(#rg-cell)"/>
  <path d="M681.800 657.400 Q693 656.900 705.400 658.900 L705 666.400 Q693 666.100 684.600 665 Q682 662.200 681.800 657.400 Z" fill="url(#rg-cell)"/>
  <path d="M709.300 654.700 L731.600 653.300 Q732.700 657 731.900 660.200 L709.900 662 Z" fill="url(#rg-cell)"/>
</g>
<!-- ===== right hand ===== -->
<g id="handR">
  <ellipse cx="993" cy="620.500" rx="10.500" ry="12" fill="#b0b4e8"/>
  <path d="M1003 627 Q1018 630 1017.500 646 Q1015 663 994 668.500 L966 672.500 L965.500 660 L990 655 Z" fill="#5877ac"/>
  <path d="M958 620 L1001.500 622.500 L1003 629.500 Q1013 632 1013 643 Q1012 652 1003.500 655.500 Q1000 664 992 668 L966.500 671.500 L965.500 664 L939 661.500 Q937 656 940 651 Q939.500 645 942 640 L945.500 634 L950 625.500 Z" fill="#1b2636"/>
  <path d="M952.500 626.600 L977.500 626.600 L972.500 633.800 L948.500 633.800 Z" fill="#ebe6ee"/>
  <path d="M1004.500 632 Q1010.500 634 1010.500 643 Q1009.500 650 1004.500 652.500 Q1008 644 1006 636 Z" fill="#5d7cb0"/>
  <path d="M984.800 625.200 L999.200 625.800 L999.400 634.700 L983.800 634 Z" fill="url(#rg-cell)"/>
  <path d="M943.800 642.400 L968.900 641.400 L967.500 648.500 L944.800 648.600 Q943 645.500 943.800 642.400 Z" fill="url(#rg-cell)"/>
  <path d="M975.600 642 L995.200 641 L991.500 650.800 L976.500 651 Z" fill="url(#rg-cell)"/>
  <path d="M941 653.600 Q955 654.500 966.800 656.500 L965.500 661.800 Q953 659.500 941.500 659 Q940 656 941 653.600 Z" fill="url(#rg-cell)"/>
  <path d="M972 659.500 Q982 658 990.200 658.500 Q990.500 663 986 665 L972.500 666.500 Z" fill="url(#rg-cell)"/>
</g>


<!-- ===== left foot ===== -->
<g id="footL">
  <path d="M681 712 Q659 714 657.200 733 Q657 752 676 758.500 L692 752 L692 715 Z" fill="#7d84a8"/>
  <path d="M682 713 Q663 715.500 660.500 732 Q661.500 746 673 750.500 Q686 744 688 730 Z" fill="#27313e"/>
  <path d="M670 737 Q672 765 700 776 L724 760 L690 733 Z" fill="#8c90bd"/>
  <path d="M700 752 Q692.500 765 702 776 Q716 786.500 728 776 Q735.500 764 727 751 Z" fill="#2a3546"/>
  <path d="M704.800 689.800 Q720 690.500 726.500 707 Q733 722 729.800 742 Q724 760 705 760.500 Q688 758 681 741 Q676.500 724 682 707 Q689 691 704.800 689.800 Z" fill="url(#rg-ring)"/>
  <ellipse cx="703.300" cy="728.800" rx="21.700" ry="24.700" fill="url(#rg-footC)" transform="rotate(-5 703.300 728.800)"/>
  <path d="M683.600 722 Q686.500 708 700 704.600" fill="none" stroke="#ffffff" stroke-width="1.600" opacity="0.85"/>
</g>
<!-- ===== right foot ===== -->
<g id="footR">
  <path d="M936 698 Q923 720 926 746 Q931 762 946 764 L940 705 Z" fill="#9c9ec8" opacity="0.9"/>
  <path d="M985 711 Q1005 715 1007.200 733 Q1006.500 751 989 756.500 L978 742 Z" fill="#6a748c"/>
  <path d="M985 713 Q1001 717.500 1003 733 Q1002 746.500 990 751 Q980 737 985 713 Z" fill="#283241"/>
  <path d="M993.500 733 Q993 764 966 776 L943 760 L975 733 Z" fill="#6b79c4"/>
  <path d="M937 752 Q930.500 768 943 778.500 Q958 786 967.500 775 Q972 764 964 752 Z" fill="#293950"/>
  <path d="M961 690.300 Q977 690.500 985.500 706 Q993 722 989.500 742 Q981 760 963 761 Q944 760 936.500 742 Q930.500 722 938 706 Q946 691 961 690.300 Z" fill="url(#rg-ring)"/>
  <ellipse cx="962.200" cy="728.800" rx="22.200" ry="24.700" fill="url(#rg-footC)" transform="rotate(5 962.200 728.800)"/>
  <path d="M942.600 722 Q945.500 708 959 704.600" fill="none" stroke="#ffffff" stroke-width="1.600" opacity="0.85"/>
</g>
</svg>
<!-- ROBOT-END -->
</div>
</body>
</html>
